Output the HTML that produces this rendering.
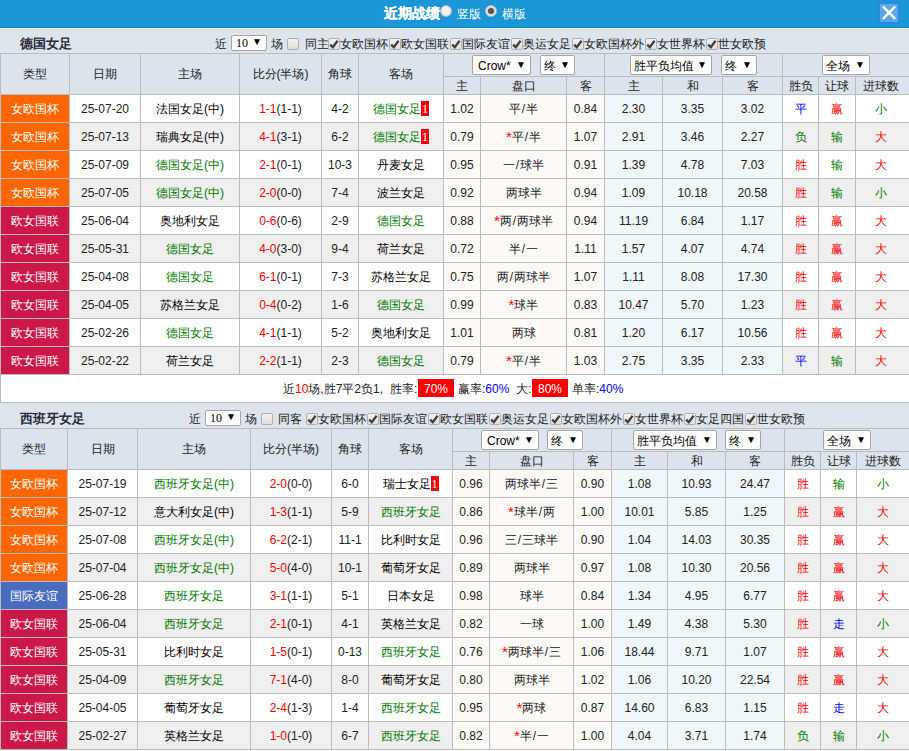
<!DOCTYPE html><html><head><meta charset="utf-8"><title>近期战绩</title><style>
*{margin:0;padding:0;box-sizing:content-box}
body{margin:0;width:909px;height:751px;overflow:hidden;background:#dde4ec;position:relative;font-family:'Liberation Sans', sans-serif;font-size:12px;color:#222}
.c{position:absolute;display:flex;align-items:center;justify-content:center;white-space:nowrap;line-height:14px}
.t{position:absolute;white-space:nowrap;line-height:14px;color:#222}
.ttl{position:absolute;white-space:nowrap;line-height:16px;font-size:13px;font-weight:bold;color:#2a2a3a}
.hl{position:absolute;height:1px;background:#bcbcbc}
.vl{position:absolute;width:1px;background:#bcbcbc}
.sel{position:absolute;box-sizing:border-box;background:#fff;border:1px solid #a6a6a6;border-radius:2px;display:flex;align-items:center;justify-content:space-between;white-space:nowrap;color:#000;line-height:14px}
.arr{font-size:10px}
.cb{position:absolute;width:10px;height:10px;border:1px solid #b0b0b0;border-radius:2px;background:linear-gradient(#f2f2f2,#dedede)}
.rbx{position:absolute;width:36px;height:17px;padding-top:1px;background:#f00;color:#fff;display:flex;align-items:center;justify-content:center;line-height:14px}
.st{color:#f00;font-size:15px;line-height:10px;position:relative;top:0px}
.sl{margin:0 1px}
.bd{display:inline-block;background:#f00;color:#fff;font-family:'Liberation Serif',serif;font-size:13px;width:8px;text-align:center;height:15px;line-height:16px;vertical-align:top;margin-top:-1px}
</style></head><body>
<div style="position:absolute;left:0px;top:0px;width:909px;height:27px;background:#1b96d6"></div>
<div style="position:absolute;left:0px;top:27px;width:909px;height:1px;background:#0b8fd3"></div>
<div style="position:absolute;left:0px;top:28px;width:909px;height:1px;background:#e9ebef"></div>
<div style="position:absolute;left:384px;top:4px;font-size:14px;font-weight:bold;color:#fff;line-height:18px;white-space:nowrap;-webkit-text-stroke:0.2px #fff">近期战绩</div>
<div style="position:absolute;left:440px;top:5px;width:10px;height:10px;border-radius:50%;border:1px solid #b8b8b8;background:radial-gradient(circle at 50% 45%,#f2f2f2 40%,#d8d8d8)"></div>
<div style="position:absolute;left:457px;top:7px;font-size:12px;color:#fff;line-height:14px;white-space:nowrap">竖版</div>
<div style="position:absolute;left:485px;top:5px;width:10px;height:10px;border-radius:50%;border:1px solid #b8b8b8;background:radial-gradient(circle,#bbb 30%,#eee 70%,#d0d0d0)"><div style="position:absolute;left:2px;top:2px;width:6px;height:6px;border-radius:50%;background:#555"></div></div>
<div style="position:absolute;left:502px;top:7px;font-size:12px;color:#fff;line-height:14px;white-space:nowrap">横版</div>
<div style="position:absolute;left:878px;top:2px;width:18px;height:18px;border:2px solid #2a8ae2;background:#5ba7e9"><svg width="18" height="18" viewBox="0 0 18 18" style="position:absolute;left:0;top:0"><path d="M3.6 3.2 L14.6 14.2 M14.6 3.2 L3.6 14.2" stroke="#fff" stroke-width="2.4" stroke-linecap="round" fill="none"/></svg></div>
<div class="ttl" style="left:20px;top:36px">德国女足</div>
<div class="t" style="left:215px;top:37px">近</div>
<div class="sel" style="left:231px;top:35px;width:36px;height:16px;padding:0 4px 0 4px"><span style="position:relative;top:1px;font-family:'Liberation Serif',serif;top:0">10</span><span class="arr" style="position:relative;top:-1px">▼</span></div>
<div class="t" style="left:271px;top:37px">场</div>
<div class="cb" style="left:287px;top:38px;"></div>
<div class="t" style="left:305px;top:37px">同主</div>
<div class="cb" style="left:328px;top:38px;"><svg width="12" height="12" viewBox="0 0 12 12" style="position:absolute;left:-1px;top:-1px"><path d="M2.2 6.6 L4.8 9.2 L9.6 2.8" stroke="#404040" stroke-width="2.3" fill="none"/></svg></div>
<div class="t" style="left:340px;top:37px">女欧国杯</div>
<div class="cb" style="left:389px;top:38px;"><svg width="12" height="12" viewBox="0 0 12 12" style="position:absolute;left:-1px;top:-1px"><path d="M2.2 6.6 L4.8 9.2 L9.6 2.8" stroke="#404040" stroke-width="2.3" fill="none"/></svg></div>
<div class="t" style="left:401px;top:37px">欧女国联</div>
<div class="cb" style="left:450px;top:38px;"><svg width="12" height="12" viewBox="0 0 12 12" style="position:absolute;left:-1px;top:-1px"><path d="M2.2 6.6 L4.8 9.2 L9.6 2.8" stroke="#404040" stroke-width="2.3" fill="none"/></svg></div>
<div class="t" style="left:462px;top:37px">国际友谊</div>
<div class="cb" style="left:511px;top:38px;"><svg width="12" height="12" viewBox="0 0 12 12" style="position:absolute;left:-1px;top:-1px"><path d="M2.2 6.6 L4.8 9.2 L9.6 2.8" stroke="#404040" stroke-width="2.3" fill="none"/></svg></div>
<div class="t" style="left:523px;top:37px">奥运女足</div>
<div class="cb" style="left:572px;top:38px;"><svg width="12" height="12" viewBox="0 0 12 12" style="position:absolute;left:-1px;top:-1px"><path d="M2.2 6.6 L4.8 9.2 L9.6 2.8" stroke="#404040" stroke-width="2.3" fill="none"/></svg></div>
<div class="t" style="left:584px;top:37px">女欧国杯外</div>
<div class="cb" style="left:645px;top:38px;"><svg width="12" height="12" viewBox="0 0 12 12" style="position:absolute;left:-1px;top:-1px"><path d="M2.2 6.6 L4.8 9.2 L9.6 2.8" stroke="#404040" stroke-width="2.3" fill="none"/></svg></div>
<div class="t" style="left:657px;top:37px">女世界杯</div>
<div class="cb" style="left:706px;top:38px;"><svg width="12" height="12" viewBox="0 0 12 12" style="position:absolute;left:-1px;top:-1px"><path d="M2.2 6.6 L4.8 9.2 L9.6 2.8" stroke="#404040" stroke-width="2.3" fill="none"/></svg></div>
<div class="t" style="left:718px;top:37px">世女欧预</div>
<div style="position:absolute;left:0px;top:53px;width:909px;height:41px;background:#dce3ec"></div>
<div class="c" style="left:1px;top:54px;width:68px;height:40px;color:#222">类型</div>
<div class="c" style="left:70px;top:54px;width:70px;height:40px;color:#222">日期</div>
<div class="c" style="left:141px;top:54px;width:98px;height:40px;color:#222">主场</div>
<div class="c" style="left:240px;top:54px;width:81px;height:40px;color:#222">比分(半场)</div>
<div class="c" style="left:322px;top:54px;width:36px;height:40px;color:#222">角球</div>
<div class="c" style="left:359px;top:54px;width:84px;height:40px;color:#222">客场</div>
<div class="c" style="left:444px;top:77px;width:36px;height:17px;color:#222">主</div>
<div class="c" style="left:481px;top:77px;width:85px;height:17px;color:#222">盘口</div>
<div class="c" style="left:567px;top:77px;width:37px;height:17px;color:#222">客</div>
<div class="c" style="left:605px;top:77px;width:57px;height:17px;color:#222">主</div>
<div class="c" style="left:663px;top:77px;width:59px;height:17px;color:#222">和</div>
<div class="c" style="left:723px;top:77px;width:59px;height:17px;color:#222">客</div>
<div class="c" style="left:783px;top:77px;width:35px;height:17px;color:#222">胜负</div>
<div class="c" style="left:819px;top:77px;width:36px;height:17px;color:#222">让球</div>
<div class="c" style="left:856px;top:77px;width:50px;height:17px;color:#222">进球数</div>
<div class="sel" style="left:472px;top:55px;width:59px;height:20px;padding:0 4px 0 5px"><span style="position:relative;top:1px;">Crow*</span><span class="arr" style="">▼</span></div>
<div class="sel" style="left:540px;top:55px;width:35px;height:20px;padding:0 4px 0 3px"><span style="position:relative;top:1px;">终</span><span class="arr" style="">▼</span></div>
<div class="sel" style="left:630px;top:55px;width:82px;height:20px;padding:0 4px 0 3px"><span style="position:relative;top:1px;">胜平负均值</span><span class="arr" style="">▼</span></div>
<div class="sel" style="left:721px;top:55px;width:36px;height:20px;padding:0 4px 0 3px"><span style="position:relative;top:1px;">终</span><span class="arr" style="">▼</span></div>
<div class="sel" style="left:822px;top:55px;width:48px;height:20px;padding:0 4px 0 3px"><span style="position:relative;top:1px;">全场</span><span class="arr" style="">▼</span></div>
<div class="c" style="left:1px;top:95px;width:68px;height:27px;background:#ff6600;color:#fff">女欧国杯</div>
<div class="c" style="left:70px;top:95px;width:70px;height:27px;background:#ffffff">25-07-20</div>
<div class="c" style="left:141px;top:95px;width:98px;height:27px;background:#ffffff;color:#000">法国女足(中)</div>
<div class="c" style="left:240px;top:95px;width:81px;height:27px;background:#ffffff"><span style="color:#ff0000">1-1</span>(1-1)</div>
<div class="c" style="left:322px;top:95px;width:36px;height:27px;background:#ffffff">4-2</div>
<div class="c" style="left:359px;top:95px;width:84px;height:27px;background:#ffffff;color:#000"><span style="color:#007a00">德国女足</span><span class="bd">1</span></div>
<div class="c" style="left:444px;top:95px;width:36px;height:27px;background:#fcf9f6">1.02</div>
<div class="c" style="left:481px;top:95px;width:85px;height:27px;background:#fcf9f6">平<span class="sl">/</span>半</div>
<div class="c" style="left:567px;top:95px;width:37px;height:27px;background:#fcf9f6">0.84</div>
<div class="c" style="left:605px;top:95px;width:57px;height:27px;background:#f0f7fb">2.30</div>
<div class="c" style="left:663px;top:95px;width:59px;height:27px;background:#f0f7fb">3.35</div>
<div class="c" style="left:723px;top:95px;width:59px;height:27px;background:#f0f7fb">3.02</div>
<div class="c" style="left:783px;top:95px;width:35px;height:27px;background:#ffffff"><span style="color:#0000ff">平</span></div>
<div class="c" style="left:819px;top:95px;width:36px;height:27px;background:#ffffff"><span style="color:#ff0000">赢</span></div>
<div class="c" style="left:856px;top:95px;width:53px;height:27px;background:#ffffff;box-sizing:border-box;padding-right:3px"><span style="color:#007a00">小</span></div>
<div class="c" style="left:1px;top:123px;width:68px;height:27px;background:#ff6600;color:#fff">女欧国杯</div>
<div class="c" style="left:70px;top:123px;width:70px;height:27px;background:#efefef">25-07-13</div>
<div class="c" style="left:141px;top:123px;width:98px;height:27px;background:#efefef;color:#000">瑞典女足(中)</div>
<div class="c" style="left:240px;top:123px;width:81px;height:27px;background:#efefef"><span style="color:#ff0000">4-1</span>(3-1)</div>
<div class="c" style="left:322px;top:123px;width:36px;height:27px;background:#efefef">6-2</div>
<div class="c" style="left:359px;top:123px;width:84px;height:27px;background:#efefef;color:#000"><span style="color:#007a00">德国女足</span><span class="bd">1</span></div>
<div class="c" style="left:444px;top:123px;width:36px;height:27px;background:#fcf9f6">0.79</div>
<div class="c" style="left:481px;top:123px;width:85px;height:27px;background:#fcf9f6"><span class="st">*</span>平<span class="sl">/</span>半</div>
<div class="c" style="left:567px;top:123px;width:37px;height:27px;background:#fcf9f6">1.07</div>
<div class="c" style="left:605px;top:123px;width:57px;height:27px;background:#f0f7fb">2.91</div>
<div class="c" style="left:663px;top:123px;width:59px;height:27px;background:#f0f7fb">3.46</div>
<div class="c" style="left:723px;top:123px;width:59px;height:27px;background:#f0f7fb">2.27</div>
<div class="c" style="left:783px;top:123px;width:35px;height:27px;background:#efefef"><span style="color:#007a00">负</span></div>
<div class="c" style="left:819px;top:123px;width:36px;height:27px;background:#efefef"><span style="color:#007a00">输</span></div>
<div class="c" style="left:856px;top:123px;width:53px;height:27px;background:#efefef;box-sizing:border-box;padding-right:3px"><span style="color:#ff0000">大</span></div>
<div class="c" style="left:1px;top:151px;width:68px;height:27px;background:#ff6600;color:#fff">女欧国杯</div>
<div class="c" style="left:70px;top:151px;width:70px;height:27px;background:#ffffff">25-07-09</div>
<div class="c" style="left:141px;top:151px;width:98px;height:27px;background:#ffffff;color:#000"><span style="color:#007a00">德国女足(中)</span></div>
<div class="c" style="left:240px;top:151px;width:81px;height:27px;background:#ffffff"><span style="color:#ff0000">2-1</span>(0-1)</div>
<div class="c" style="left:322px;top:151px;width:36px;height:27px;background:#ffffff">10-3</div>
<div class="c" style="left:359px;top:151px;width:84px;height:27px;background:#ffffff;color:#000">丹麦女足</div>
<div class="c" style="left:444px;top:151px;width:36px;height:27px;background:#fcf9f6">0.95</div>
<div class="c" style="left:481px;top:151px;width:85px;height:27px;background:#fcf9f6">一<span class="sl">/</span>球半</div>
<div class="c" style="left:567px;top:151px;width:37px;height:27px;background:#fcf9f6">0.91</div>
<div class="c" style="left:605px;top:151px;width:57px;height:27px;background:#f0f7fb">1.39</div>
<div class="c" style="left:663px;top:151px;width:59px;height:27px;background:#f0f7fb">4.78</div>
<div class="c" style="left:723px;top:151px;width:59px;height:27px;background:#f0f7fb">7.03</div>
<div class="c" style="left:783px;top:151px;width:35px;height:27px;background:#ffffff"><span style="color:#ff0000">胜</span></div>
<div class="c" style="left:819px;top:151px;width:36px;height:27px;background:#ffffff"><span style="color:#007a00">输</span></div>
<div class="c" style="left:856px;top:151px;width:53px;height:27px;background:#ffffff;box-sizing:border-box;padding-right:3px"><span style="color:#ff0000">大</span></div>
<div class="c" style="left:1px;top:179px;width:68px;height:27px;background:#ff6600;color:#fff">女欧国杯</div>
<div class="c" style="left:70px;top:179px;width:70px;height:27px;background:#efefef">25-07-05</div>
<div class="c" style="left:141px;top:179px;width:98px;height:27px;background:#efefef;color:#000"><span style="color:#007a00">德国女足(中)</span></div>
<div class="c" style="left:240px;top:179px;width:81px;height:27px;background:#efefef"><span style="color:#ff0000">2-0</span>(0-0)</div>
<div class="c" style="left:322px;top:179px;width:36px;height:27px;background:#efefef">7-4</div>
<div class="c" style="left:359px;top:179px;width:84px;height:27px;background:#efefef;color:#000">波兰女足</div>
<div class="c" style="left:444px;top:179px;width:36px;height:27px;background:#fcf9f6">0.92</div>
<div class="c" style="left:481px;top:179px;width:85px;height:27px;background:#fcf9f6">两球半</div>
<div class="c" style="left:567px;top:179px;width:37px;height:27px;background:#fcf9f6">0.94</div>
<div class="c" style="left:605px;top:179px;width:57px;height:27px;background:#f0f7fb">1.09</div>
<div class="c" style="left:663px;top:179px;width:59px;height:27px;background:#f0f7fb">10.18</div>
<div class="c" style="left:723px;top:179px;width:59px;height:27px;background:#f0f7fb">20.58</div>
<div class="c" style="left:783px;top:179px;width:35px;height:27px;background:#efefef"><span style="color:#ff0000">胜</span></div>
<div class="c" style="left:819px;top:179px;width:36px;height:27px;background:#efefef"><span style="color:#007a00">输</span></div>
<div class="c" style="left:856px;top:179px;width:53px;height:27px;background:#efefef;box-sizing:border-box;padding-right:3px"><span style="color:#007a00">小</span></div>
<div class="c" style="left:1px;top:207px;width:68px;height:27px;background:#cc1848;color:#fff">欧女国联</div>
<div class="c" style="left:70px;top:207px;width:70px;height:27px;background:#ffffff">25-06-04</div>
<div class="c" style="left:141px;top:207px;width:98px;height:27px;background:#ffffff;color:#000">奥地利女足</div>
<div class="c" style="left:240px;top:207px;width:81px;height:27px;background:#ffffff"><span style="color:#ff0000">0-6</span>(0-6)</div>
<div class="c" style="left:322px;top:207px;width:36px;height:27px;background:#ffffff">2-9</div>
<div class="c" style="left:359px;top:207px;width:84px;height:27px;background:#ffffff;color:#000"><span style="color:#007a00">德国女足</span></div>
<div class="c" style="left:444px;top:207px;width:36px;height:27px;background:#fcf9f6">0.88</div>
<div class="c" style="left:481px;top:207px;width:85px;height:27px;background:#fcf9f6"><span class="st">*</span>两<span class="sl">/</span>两球半</div>
<div class="c" style="left:567px;top:207px;width:37px;height:27px;background:#fcf9f6">0.94</div>
<div class="c" style="left:605px;top:207px;width:57px;height:27px;background:#f0f7fb">11.19</div>
<div class="c" style="left:663px;top:207px;width:59px;height:27px;background:#f0f7fb">6.84</div>
<div class="c" style="left:723px;top:207px;width:59px;height:27px;background:#f0f7fb">1.17</div>
<div class="c" style="left:783px;top:207px;width:35px;height:27px;background:#ffffff"><span style="color:#ff0000">胜</span></div>
<div class="c" style="left:819px;top:207px;width:36px;height:27px;background:#ffffff"><span style="color:#ff0000">赢</span></div>
<div class="c" style="left:856px;top:207px;width:53px;height:27px;background:#ffffff;box-sizing:border-box;padding-right:3px"><span style="color:#ff0000">大</span></div>
<div class="c" style="left:1px;top:235px;width:68px;height:27px;background:#cc1848;color:#fff">欧女国联</div>
<div class="c" style="left:70px;top:235px;width:70px;height:27px;background:#efefef">25-05-31</div>
<div class="c" style="left:141px;top:235px;width:98px;height:27px;background:#efefef;color:#000"><span style="color:#007a00">德国女足</span></div>
<div class="c" style="left:240px;top:235px;width:81px;height:27px;background:#efefef"><span style="color:#ff0000">4-0</span>(3-0)</div>
<div class="c" style="left:322px;top:235px;width:36px;height:27px;background:#efefef">9-4</div>
<div class="c" style="left:359px;top:235px;width:84px;height:27px;background:#efefef;color:#000">荷兰女足</div>
<div class="c" style="left:444px;top:235px;width:36px;height:27px;background:#fcf9f6">0.72</div>
<div class="c" style="left:481px;top:235px;width:85px;height:27px;background:#fcf9f6">半<span class="sl">/</span>一</div>
<div class="c" style="left:567px;top:235px;width:37px;height:27px;background:#fcf9f6">1.11</div>
<div class="c" style="left:605px;top:235px;width:57px;height:27px;background:#f0f7fb">1.57</div>
<div class="c" style="left:663px;top:235px;width:59px;height:27px;background:#f0f7fb">4.07</div>
<div class="c" style="left:723px;top:235px;width:59px;height:27px;background:#f0f7fb">4.74</div>
<div class="c" style="left:783px;top:235px;width:35px;height:27px;background:#efefef"><span style="color:#ff0000">胜</span></div>
<div class="c" style="left:819px;top:235px;width:36px;height:27px;background:#efefef"><span style="color:#ff0000">赢</span></div>
<div class="c" style="left:856px;top:235px;width:53px;height:27px;background:#efefef;box-sizing:border-box;padding-right:3px"><span style="color:#ff0000">大</span></div>
<div class="c" style="left:1px;top:263px;width:68px;height:27px;background:#cc1848;color:#fff">欧女国联</div>
<div class="c" style="left:70px;top:263px;width:70px;height:27px;background:#ffffff">25-04-08</div>
<div class="c" style="left:141px;top:263px;width:98px;height:27px;background:#ffffff;color:#000"><span style="color:#007a00">德国女足</span></div>
<div class="c" style="left:240px;top:263px;width:81px;height:27px;background:#ffffff"><span style="color:#ff0000">6-1</span>(0-1)</div>
<div class="c" style="left:322px;top:263px;width:36px;height:27px;background:#ffffff">7-3</div>
<div class="c" style="left:359px;top:263px;width:84px;height:27px;background:#ffffff;color:#000">苏格兰女足</div>
<div class="c" style="left:444px;top:263px;width:36px;height:27px;background:#fcf9f6">0.75</div>
<div class="c" style="left:481px;top:263px;width:85px;height:27px;background:#fcf9f6">两<span class="sl">/</span>两球半</div>
<div class="c" style="left:567px;top:263px;width:37px;height:27px;background:#fcf9f6">1.07</div>
<div class="c" style="left:605px;top:263px;width:57px;height:27px;background:#f0f7fb">1.11</div>
<div class="c" style="left:663px;top:263px;width:59px;height:27px;background:#f0f7fb">8.08</div>
<div class="c" style="left:723px;top:263px;width:59px;height:27px;background:#f0f7fb">17.30</div>
<div class="c" style="left:783px;top:263px;width:35px;height:27px;background:#ffffff"><span style="color:#ff0000">胜</span></div>
<div class="c" style="left:819px;top:263px;width:36px;height:27px;background:#ffffff"><span style="color:#ff0000">赢</span></div>
<div class="c" style="left:856px;top:263px;width:53px;height:27px;background:#ffffff;box-sizing:border-box;padding-right:3px"><span style="color:#ff0000">大</span></div>
<div class="c" style="left:1px;top:291px;width:68px;height:27px;background:#cc1848;color:#fff">欧女国联</div>
<div class="c" style="left:70px;top:291px;width:70px;height:27px;background:#efefef">25-04-05</div>
<div class="c" style="left:141px;top:291px;width:98px;height:27px;background:#efefef;color:#000">苏格兰女足</div>
<div class="c" style="left:240px;top:291px;width:81px;height:27px;background:#efefef"><span style="color:#ff0000">0-4</span>(0-2)</div>
<div class="c" style="left:322px;top:291px;width:36px;height:27px;background:#efefef">1-6</div>
<div class="c" style="left:359px;top:291px;width:84px;height:27px;background:#efefef;color:#000"><span style="color:#007a00">德国女足</span></div>
<div class="c" style="left:444px;top:291px;width:36px;height:27px;background:#fcf9f6">0.99</div>
<div class="c" style="left:481px;top:291px;width:85px;height:27px;background:#fcf9f6"><span class="st">*</span>球半</div>
<div class="c" style="left:567px;top:291px;width:37px;height:27px;background:#fcf9f6">0.83</div>
<div class="c" style="left:605px;top:291px;width:57px;height:27px;background:#f0f7fb">10.47</div>
<div class="c" style="left:663px;top:291px;width:59px;height:27px;background:#f0f7fb">5.70</div>
<div class="c" style="left:723px;top:291px;width:59px;height:27px;background:#f0f7fb">1.23</div>
<div class="c" style="left:783px;top:291px;width:35px;height:27px;background:#efefef"><span style="color:#ff0000">胜</span></div>
<div class="c" style="left:819px;top:291px;width:36px;height:27px;background:#efefef"><span style="color:#ff0000">赢</span></div>
<div class="c" style="left:856px;top:291px;width:53px;height:27px;background:#efefef;box-sizing:border-box;padding-right:3px"><span style="color:#ff0000">大</span></div>
<div class="c" style="left:1px;top:319px;width:68px;height:27px;background:#cc1848;color:#fff">欧女国联</div>
<div class="c" style="left:70px;top:319px;width:70px;height:27px;background:#ffffff">25-02-26</div>
<div class="c" style="left:141px;top:319px;width:98px;height:27px;background:#ffffff;color:#000"><span style="color:#007a00">德国女足</span></div>
<div class="c" style="left:240px;top:319px;width:81px;height:27px;background:#ffffff"><span style="color:#ff0000">4-1</span>(1-1)</div>
<div class="c" style="left:322px;top:319px;width:36px;height:27px;background:#ffffff">5-2</div>
<div class="c" style="left:359px;top:319px;width:84px;height:27px;background:#ffffff;color:#000">奥地利女足</div>
<div class="c" style="left:444px;top:319px;width:36px;height:27px;background:#fcf9f6">1.01</div>
<div class="c" style="left:481px;top:319px;width:85px;height:27px;background:#fcf9f6">两球</div>
<div class="c" style="left:567px;top:319px;width:37px;height:27px;background:#fcf9f6">0.81</div>
<div class="c" style="left:605px;top:319px;width:57px;height:27px;background:#f0f7fb">1.20</div>
<div class="c" style="left:663px;top:319px;width:59px;height:27px;background:#f0f7fb">6.17</div>
<div class="c" style="left:723px;top:319px;width:59px;height:27px;background:#f0f7fb">10.56</div>
<div class="c" style="left:783px;top:319px;width:35px;height:27px;background:#ffffff"><span style="color:#ff0000">胜</span></div>
<div class="c" style="left:819px;top:319px;width:36px;height:27px;background:#ffffff"><span style="color:#ff0000">赢</span></div>
<div class="c" style="left:856px;top:319px;width:53px;height:27px;background:#ffffff;box-sizing:border-box;padding-right:3px"><span style="color:#ff0000">大</span></div>
<div class="c" style="left:1px;top:347px;width:68px;height:27px;background:#cc1848;color:#fff">欧女国联</div>
<div class="c" style="left:70px;top:347px;width:70px;height:27px;background:#efefef">25-02-22</div>
<div class="c" style="left:141px;top:347px;width:98px;height:27px;background:#efefef;color:#000">荷兰女足</div>
<div class="c" style="left:240px;top:347px;width:81px;height:27px;background:#efefef"><span style="color:#ff0000">2-2</span>(1-1)</div>
<div class="c" style="left:322px;top:347px;width:36px;height:27px;background:#efefef">2-3</div>
<div class="c" style="left:359px;top:347px;width:84px;height:27px;background:#efefef;color:#000"><span style="color:#007a00">德国女足</span></div>
<div class="c" style="left:444px;top:347px;width:36px;height:27px;background:#fcf9f6">0.79</div>
<div class="c" style="left:481px;top:347px;width:85px;height:27px;background:#fcf9f6"><span class="st">*</span>平<span class="sl">/</span>半</div>
<div class="c" style="left:567px;top:347px;width:37px;height:27px;background:#fcf9f6">1.03</div>
<div class="c" style="left:605px;top:347px;width:57px;height:27px;background:#f0f7fb">2.75</div>
<div class="c" style="left:663px;top:347px;width:59px;height:27px;background:#f0f7fb">3.35</div>
<div class="c" style="left:723px;top:347px;width:59px;height:27px;background:#f0f7fb">2.33</div>
<div class="c" style="left:783px;top:347px;width:35px;height:27px;background:#efefef"><span style="color:#0000ff">平</span></div>
<div class="c" style="left:819px;top:347px;width:36px;height:27px;background:#efefef"><span style="color:#007a00">输</span></div>
<div class="c" style="left:856px;top:347px;width:53px;height:27px;background:#efefef;box-sizing:border-box;padding-right:3px"><span style="color:#ff0000">大</span></div>
<div class="hl" style="left:0;top:53px;width:909px"></div>
<div class="hl" style="left:443px;top:76px;width:466px"></div>
<div class="hl" style="left:0;top:94px;width:909px"></div>
<div class="hl" style="left:0;top:122px;width:909px"></div>
<div class="hl" style="left:0;top:150px;width:909px"></div>
<div class="hl" style="left:0;top:178px;width:909px"></div>
<div class="hl" style="left:0;top:206px;width:909px"></div>
<div class="hl" style="left:0;top:234px;width:909px"></div>
<div class="hl" style="left:0;top:262px;width:909px"></div>
<div class="hl" style="left:0;top:290px;width:909px"></div>
<div class="hl" style="left:0;top:318px;width:909px"></div>
<div class="hl" style="left:0;top:346px;width:909px"></div>
<div class="hl" style="left:0;top:374px;width:909px"></div>
<div class="vl" style="left:0px;top:53px;height:322px"></div>
<div class="vl" style="left:69px;top:53px;height:322px"></div>
<div class="vl" style="left:140px;top:53px;height:322px"></div>
<div class="vl" style="left:239px;top:53px;height:322px"></div>
<div class="vl" style="left:321px;top:53px;height:322px"></div>
<div class="vl" style="left:358px;top:53px;height:322px"></div>
<div class="vl" style="left:443px;top:53px;height:322px"></div>
<div class="vl" style="left:480px;top:76px;height:299px"></div>
<div class="vl" style="left:566px;top:76px;height:299px"></div>
<div class="vl" style="left:604px;top:53px;height:322px"></div>
<div class="vl" style="left:662px;top:76px;height:299px"></div>
<div class="vl" style="left:722px;top:76px;height:299px"></div>
<div class="vl" style="left:782px;top:53px;height:322px"></div>
<div class="vl" style="left:818px;top:76px;height:299px"></div>
<div class="vl" style="left:855px;top:76px;height:299px"></div>
<div style="position:absolute;left:0px;top:375px;width:909px;height:27px;background:#fff"></div>
<div class="t" style="left:283px;top:382px">近<span style="color:#ff0000">10</span>场,胜7平2负1,</div>
<div class="t" style="left:390px;top:382px">胜率:</div>
<div class="rbx" style="left:418px;top:379px">70%</div>
<div class="t" style="left:458px;top:382px">赢率:<span style="color:#0000ff">60%</span></div>
<div class="t" style="left:516px;top:382px">大:</div>
<div class="rbx" style="left:532px;top:379px">80%</div>
<div class="t" style="left:572px;top:382px">单率:<span style="color:#0000ff">40%</span></div>
<div class="hl" style="left:0;top:402px;width:909px"></div>
<div class="vl" style="left:0;top:374px;height:28px"></div>
<div class="ttl" style="left:20px;top:411px">西班牙女足</div>
<div class="t" style="left:189px;top:412px">近</div>
<div class="sel" style="left:205px;top:410px;width:36px;height:16px;padding:0 4px 0 4px"><span style="position:relative;top:1px;font-family:'Liberation Serif',serif;top:0">10</span><span class="arr" style="position:relative;top:-1px">▼</span></div>
<div class="t" style="left:245px;top:412px">场</div>
<div class="cb" style="left:261px;top:413px;"></div>
<div class="t" style="left:278px;top:412px">同客</div>
<div class="cb" style="left:306px;top:413px;"><svg width="12" height="12" viewBox="0 0 12 12" style="position:absolute;left:-1px;top:-1px"><path d="M2.2 6.6 L4.8 9.2 L9.6 2.8" stroke="#404040" stroke-width="2.3" fill="none"/></svg></div>
<div class="t" style="left:318px;top:412px">女欧国杯</div>
<div class="cb" style="left:367px;top:413px;"><svg width="12" height="12" viewBox="0 0 12 12" style="position:absolute;left:-1px;top:-1px"><path d="M2.2 6.6 L4.8 9.2 L9.6 2.8" stroke="#404040" stroke-width="2.3" fill="none"/></svg></div>
<div class="t" style="left:379px;top:412px">国际友谊</div>
<div class="cb" style="left:428px;top:413px;"><svg width="12" height="12" viewBox="0 0 12 12" style="position:absolute;left:-1px;top:-1px"><path d="M2.2 6.6 L4.8 9.2 L9.6 2.8" stroke="#404040" stroke-width="2.3" fill="none"/></svg></div>
<div class="t" style="left:440px;top:412px">欧女国联</div>
<div class="cb" style="left:489px;top:413px;"><svg width="12" height="12" viewBox="0 0 12 12" style="position:absolute;left:-1px;top:-1px"><path d="M2.2 6.6 L4.8 9.2 L9.6 2.8" stroke="#404040" stroke-width="2.3" fill="none"/></svg></div>
<div class="t" style="left:501px;top:412px">奥运女足</div>
<div class="cb" style="left:550px;top:413px;"><svg width="12" height="12" viewBox="0 0 12 12" style="position:absolute;left:-1px;top:-1px"><path d="M2.2 6.6 L4.8 9.2 L9.6 2.8" stroke="#404040" stroke-width="2.3" fill="none"/></svg></div>
<div class="t" style="left:562px;top:412px">女欧国杯外</div>
<div class="cb" style="left:623px;top:413px;"><svg width="12" height="12" viewBox="0 0 12 12" style="position:absolute;left:-1px;top:-1px"><path d="M2.2 6.6 L4.8 9.2 L9.6 2.8" stroke="#404040" stroke-width="2.3" fill="none"/></svg></div>
<div class="t" style="left:635px;top:412px">女世界杯</div>
<div class="cb" style="left:684px;top:413px;"><svg width="12" height="12" viewBox="0 0 12 12" style="position:absolute;left:-1px;top:-1px"><path d="M2.2 6.6 L4.8 9.2 L9.6 2.8" stroke="#404040" stroke-width="2.3" fill="none"/></svg></div>
<div class="t" style="left:696px;top:412px">女足四国</div>
<div class="cb" style="left:745px;top:413px;"><svg width="12" height="12" viewBox="0 0 12 12" style="position:absolute;left:-1px;top:-1px"><path d="M2.2 6.6 L4.8 9.2 L9.6 2.8" stroke="#404040" stroke-width="2.3" fill="none"/></svg></div>
<div class="t" style="left:757px;top:412px">世女欧预</div>
<div style="position:absolute;left:0px;top:428px;width:909px;height:41px;background:#dce3ec"></div>
<div class="c" style="left:1px;top:429px;width:66px;height:40px;color:#222">类型</div>
<div class="c" style="left:68px;top:429px;width:69px;height:40px;color:#222">日期</div>
<div class="c" style="left:138px;top:429px;width:112px;height:40px;color:#222">主场</div>
<div class="c" style="left:251px;top:429px;width:80px;height:40px;color:#222">比分(半场)</div>
<div class="c" style="left:332px;top:429px;width:36px;height:40px;color:#222">角球</div>
<div class="c" style="left:369px;top:429px;width:83px;height:40px;color:#222">客场</div>
<div class="c" style="left:453px;top:452px;width:36px;height:17px;color:#222">主</div>
<div class="c" style="left:490px;top:452px;width:83px;height:17px;color:#222">盘口</div>
<div class="c" style="left:574px;top:452px;width:37px;height:17px;color:#222">客</div>
<div class="c" style="left:612px;top:452px;width:55px;height:17px;color:#222">主</div>
<div class="c" style="left:668px;top:452px;width:57px;height:17px;color:#222">和</div>
<div class="c" style="left:726px;top:452px;width:58px;height:17px;color:#222">客</div>
<div class="c" style="left:785px;top:452px;width:35px;height:17px;color:#222">胜负</div>
<div class="c" style="left:821px;top:452px;width:35px;height:17px;color:#222">让球</div>
<div class="c" style="left:857px;top:452px;width:52px;height:17px;color:#222">进球数</div>
<div class="sel" style="left:481px;top:430px;width:58px;height:20px;padding:0 4px 0 5px"><span style="position:relative;top:1px;">Crow*</span><span class="arr" style="">▼</span></div>
<div class="sel" style="left:547px;top:430px;width:36px;height:20px;padding:0 4px 0 3px"><span style="position:relative;top:1px;">终</span><span class="arr" style="">▼</span></div>
<div class="sel" style="left:633px;top:430px;width:84px;height:20px;padding:0 4px 0 3px"><span style="position:relative;top:1px;">胜平负均值</span><span class="arr" style="">▼</span></div>
<div class="sel" style="left:725px;top:430px;width:36px;height:20px;padding:0 4px 0 3px"><span style="position:relative;top:1px;">终</span><span class="arr" style="">▼</span></div>
<div class="sel" style="left:823px;top:430px;width:48px;height:20px;padding:0 4px 0 3px"><span style="position:relative;top:1px;">全场</span><span class="arr" style="">▼</span></div>
<div class="c" style="left:1px;top:470px;width:66px;height:27px;background:#ff6600;color:#fff">女欧国杯</div>
<div class="c" style="left:68px;top:470px;width:69px;height:27px;background:#ffffff">25-07-19</div>
<div class="c" style="left:138px;top:470px;width:112px;height:27px;background:#ffffff;color:#000"><span style="color:#007a00">西班牙女足(中)</span></div>
<div class="c" style="left:251px;top:470px;width:80px;height:27px;background:#ffffff"><span style="color:#ff0000">2-0</span>(0-0)</div>
<div class="c" style="left:332px;top:470px;width:36px;height:27px;background:#ffffff">6-0</div>
<div class="c" style="left:369px;top:470px;width:83px;height:27px;background:#ffffff;color:#000">瑞士女足<span class="bd">1</span></div>
<div class="c" style="left:453px;top:470px;width:36px;height:27px;background:#fcf9f6">0.96</div>
<div class="c" style="left:490px;top:470px;width:83px;height:27px;background:#fcf9f6">两球半<span class="sl">/</span>三</div>
<div class="c" style="left:574px;top:470px;width:37px;height:27px;background:#fcf9f6">0.90</div>
<div class="c" style="left:612px;top:470px;width:55px;height:27px;background:#f0f7fb">1.08</div>
<div class="c" style="left:668px;top:470px;width:57px;height:27px;background:#f0f7fb">10.93</div>
<div class="c" style="left:726px;top:470px;width:58px;height:27px;background:#f0f7fb">24.47</div>
<div class="c" style="left:785px;top:470px;width:35px;height:27px;background:#ffffff"><span style="color:#ff0000">胜</span></div>
<div class="c" style="left:821px;top:470px;width:35px;height:27px;background:#ffffff"><span style="color:#007a00">输</span></div>
<div class="c" style="left:857px;top:470px;width:52px;height:27px;background:#ffffff"><span style="color:#007a00">小</span></div>
<div class="c" style="left:1px;top:498px;width:66px;height:27px;background:#ff6600;color:#fff">女欧国杯</div>
<div class="c" style="left:68px;top:498px;width:69px;height:27px;background:#efefef">25-07-12</div>
<div class="c" style="left:138px;top:498px;width:112px;height:27px;background:#efefef;color:#000">意大利女足(中)</div>
<div class="c" style="left:251px;top:498px;width:80px;height:27px;background:#efefef"><span style="color:#ff0000">1-3</span>(1-1)</div>
<div class="c" style="left:332px;top:498px;width:36px;height:27px;background:#efefef">5-9</div>
<div class="c" style="left:369px;top:498px;width:83px;height:27px;background:#efefef;color:#000"><span style="color:#007a00">西班牙女足</span></div>
<div class="c" style="left:453px;top:498px;width:36px;height:27px;background:#fcf9f6">0.86</div>
<div class="c" style="left:490px;top:498px;width:83px;height:27px;background:#fcf9f6"><span class="st">*</span>球半<span class="sl">/</span>两</div>
<div class="c" style="left:574px;top:498px;width:37px;height:27px;background:#fcf9f6">1.00</div>
<div class="c" style="left:612px;top:498px;width:55px;height:27px;background:#f0f7fb">10.01</div>
<div class="c" style="left:668px;top:498px;width:57px;height:27px;background:#f0f7fb">5.85</div>
<div class="c" style="left:726px;top:498px;width:58px;height:27px;background:#f0f7fb">1.25</div>
<div class="c" style="left:785px;top:498px;width:35px;height:27px;background:#efefef"><span style="color:#ff0000">胜</span></div>
<div class="c" style="left:821px;top:498px;width:35px;height:27px;background:#efefef"><span style="color:#ff0000">赢</span></div>
<div class="c" style="left:857px;top:498px;width:52px;height:27px;background:#efefef"><span style="color:#ff0000">大</span></div>
<div class="c" style="left:1px;top:526px;width:66px;height:27px;background:#ff6600;color:#fff">女欧国杯</div>
<div class="c" style="left:68px;top:526px;width:69px;height:27px;background:#ffffff">25-07-08</div>
<div class="c" style="left:138px;top:526px;width:112px;height:27px;background:#ffffff;color:#000"><span style="color:#007a00">西班牙女足(中)</span></div>
<div class="c" style="left:251px;top:526px;width:80px;height:27px;background:#ffffff"><span style="color:#ff0000">6-2</span>(2-1)</div>
<div class="c" style="left:332px;top:526px;width:36px;height:27px;background:#ffffff">11-1</div>
<div class="c" style="left:369px;top:526px;width:83px;height:27px;background:#ffffff;color:#000">比利时女足</div>
<div class="c" style="left:453px;top:526px;width:36px;height:27px;background:#fcf9f6">0.96</div>
<div class="c" style="left:490px;top:526px;width:83px;height:27px;background:#fcf9f6">三<span class="sl">/</span>三球半</div>
<div class="c" style="left:574px;top:526px;width:37px;height:27px;background:#fcf9f6">0.90</div>
<div class="c" style="left:612px;top:526px;width:55px;height:27px;background:#f0f7fb">1.04</div>
<div class="c" style="left:668px;top:526px;width:57px;height:27px;background:#f0f7fb">14.03</div>
<div class="c" style="left:726px;top:526px;width:58px;height:27px;background:#f0f7fb">30.35</div>
<div class="c" style="left:785px;top:526px;width:35px;height:27px;background:#ffffff"><span style="color:#ff0000">胜</span></div>
<div class="c" style="left:821px;top:526px;width:35px;height:27px;background:#ffffff"><span style="color:#ff0000">赢</span></div>
<div class="c" style="left:857px;top:526px;width:52px;height:27px;background:#ffffff"><span style="color:#ff0000">大</span></div>
<div class="c" style="left:1px;top:554px;width:66px;height:27px;background:#ff6600;color:#fff">女欧国杯</div>
<div class="c" style="left:68px;top:554px;width:69px;height:27px;background:#efefef">25-07-04</div>
<div class="c" style="left:138px;top:554px;width:112px;height:27px;background:#efefef;color:#000"><span style="color:#007a00">西班牙女足(中)</span></div>
<div class="c" style="left:251px;top:554px;width:80px;height:27px;background:#efefef"><span style="color:#ff0000">5-0</span>(4-0)</div>
<div class="c" style="left:332px;top:554px;width:36px;height:27px;background:#efefef">10-1</div>
<div class="c" style="left:369px;top:554px;width:83px;height:27px;background:#efefef;color:#000">葡萄牙女足</div>
<div class="c" style="left:453px;top:554px;width:36px;height:27px;background:#fcf9f6">0.89</div>
<div class="c" style="left:490px;top:554px;width:83px;height:27px;background:#fcf9f6">两球半</div>
<div class="c" style="left:574px;top:554px;width:37px;height:27px;background:#fcf9f6">0.97</div>
<div class="c" style="left:612px;top:554px;width:55px;height:27px;background:#f0f7fb">1.08</div>
<div class="c" style="left:668px;top:554px;width:57px;height:27px;background:#f0f7fb">10.30</div>
<div class="c" style="left:726px;top:554px;width:58px;height:27px;background:#f0f7fb">20.56</div>
<div class="c" style="left:785px;top:554px;width:35px;height:27px;background:#efefef"><span style="color:#ff0000">胜</span></div>
<div class="c" style="left:821px;top:554px;width:35px;height:27px;background:#efefef"><span style="color:#ff0000">赢</span></div>
<div class="c" style="left:857px;top:554px;width:52px;height:27px;background:#efefef"><span style="color:#ff0000">大</span></div>
<div class="c" style="left:1px;top:582px;width:66px;height:27px;background:#4a6cbe;color:#fff">国际友谊</div>
<div class="c" style="left:68px;top:582px;width:69px;height:27px;background:#ffffff">25-06-28</div>
<div class="c" style="left:138px;top:582px;width:112px;height:27px;background:#ffffff;color:#000"><span style="color:#007a00">西班牙女足</span></div>
<div class="c" style="left:251px;top:582px;width:80px;height:27px;background:#ffffff"><span style="color:#ff0000">3-1</span>(1-1)</div>
<div class="c" style="left:332px;top:582px;width:36px;height:27px;background:#ffffff">5-1</div>
<div class="c" style="left:369px;top:582px;width:83px;height:27px;background:#ffffff;color:#000">日本女足</div>
<div class="c" style="left:453px;top:582px;width:36px;height:27px;background:#fcf9f6">0.98</div>
<div class="c" style="left:490px;top:582px;width:83px;height:27px;background:#fcf9f6">球半</div>
<div class="c" style="left:574px;top:582px;width:37px;height:27px;background:#fcf9f6">0.84</div>
<div class="c" style="left:612px;top:582px;width:55px;height:27px;background:#f0f7fb">1.34</div>
<div class="c" style="left:668px;top:582px;width:57px;height:27px;background:#f0f7fb">4.95</div>
<div class="c" style="left:726px;top:582px;width:58px;height:27px;background:#f0f7fb">6.77</div>
<div class="c" style="left:785px;top:582px;width:35px;height:27px;background:#ffffff"><span style="color:#ff0000">胜</span></div>
<div class="c" style="left:821px;top:582px;width:35px;height:27px;background:#ffffff"><span style="color:#ff0000">赢</span></div>
<div class="c" style="left:857px;top:582px;width:52px;height:27px;background:#ffffff"><span style="color:#ff0000">大</span></div>
<div class="c" style="left:1px;top:610px;width:66px;height:27px;background:#cc1848;color:#fff">欧女国联</div>
<div class="c" style="left:68px;top:610px;width:69px;height:27px;background:#efefef">25-06-04</div>
<div class="c" style="left:138px;top:610px;width:112px;height:27px;background:#efefef;color:#000"><span style="color:#007a00">西班牙女足</span></div>
<div class="c" style="left:251px;top:610px;width:80px;height:27px;background:#efefef"><span style="color:#ff0000">2-1</span>(0-1)</div>
<div class="c" style="left:332px;top:610px;width:36px;height:27px;background:#efefef">4-1</div>
<div class="c" style="left:369px;top:610px;width:83px;height:27px;background:#efefef;color:#000">英格兰女足</div>
<div class="c" style="left:453px;top:610px;width:36px;height:27px;background:#fcf9f6">0.82</div>
<div class="c" style="left:490px;top:610px;width:83px;height:27px;background:#fcf9f6">一球</div>
<div class="c" style="left:574px;top:610px;width:37px;height:27px;background:#fcf9f6">1.00</div>
<div class="c" style="left:612px;top:610px;width:55px;height:27px;background:#f0f7fb">1.49</div>
<div class="c" style="left:668px;top:610px;width:57px;height:27px;background:#f0f7fb">4.38</div>
<div class="c" style="left:726px;top:610px;width:58px;height:27px;background:#f0f7fb">5.30</div>
<div class="c" style="left:785px;top:610px;width:35px;height:27px;background:#efefef"><span style="color:#ff0000">胜</span></div>
<div class="c" style="left:821px;top:610px;width:35px;height:27px;background:#efefef"><span style="color:#0000ff">走</span></div>
<div class="c" style="left:857px;top:610px;width:52px;height:27px;background:#efefef"><span style="color:#007a00">小</span></div>
<div class="c" style="left:1px;top:638px;width:66px;height:27px;background:#cc1848;color:#fff">欧女国联</div>
<div class="c" style="left:68px;top:638px;width:69px;height:27px;background:#ffffff">25-05-31</div>
<div class="c" style="left:138px;top:638px;width:112px;height:27px;background:#ffffff;color:#000">比利时女足</div>
<div class="c" style="left:251px;top:638px;width:80px;height:27px;background:#ffffff"><span style="color:#ff0000">1-5</span>(0-1)</div>
<div class="c" style="left:332px;top:638px;width:36px;height:27px;background:#ffffff">0-13</div>
<div class="c" style="left:369px;top:638px;width:83px;height:27px;background:#ffffff;color:#000"><span style="color:#007a00">西班牙女足</span></div>
<div class="c" style="left:453px;top:638px;width:36px;height:27px;background:#fcf9f6">0.76</div>
<div class="c" style="left:490px;top:638px;width:83px;height:27px;background:#fcf9f6"><span class="st">*</span>两球半<span class="sl">/</span>三</div>
<div class="c" style="left:574px;top:638px;width:37px;height:27px;background:#fcf9f6">1.06</div>
<div class="c" style="left:612px;top:638px;width:55px;height:27px;background:#f0f7fb">18.44</div>
<div class="c" style="left:668px;top:638px;width:57px;height:27px;background:#f0f7fb">9.71</div>
<div class="c" style="left:726px;top:638px;width:58px;height:27px;background:#f0f7fb">1.07</div>
<div class="c" style="left:785px;top:638px;width:35px;height:27px;background:#ffffff"><span style="color:#ff0000">胜</span></div>
<div class="c" style="left:821px;top:638px;width:35px;height:27px;background:#ffffff"><span style="color:#ff0000">赢</span></div>
<div class="c" style="left:857px;top:638px;width:52px;height:27px;background:#ffffff"><span style="color:#ff0000">大</span></div>
<div class="c" style="left:1px;top:666px;width:66px;height:27px;background:#cc1848;color:#fff">欧女国联</div>
<div class="c" style="left:68px;top:666px;width:69px;height:27px;background:#efefef">25-04-09</div>
<div class="c" style="left:138px;top:666px;width:112px;height:27px;background:#efefef;color:#000"><span style="color:#007a00">西班牙女足</span></div>
<div class="c" style="left:251px;top:666px;width:80px;height:27px;background:#efefef"><span style="color:#ff0000">7-1</span>(4-0)</div>
<div class="c" style="left:332px;top:666px;width:36px;height:27px;background:#efefef">8-0</div>
<div class="c" style="left:369px;top:666px;width:83px;height:27px;background:#efefef;color:#000">葡萄牙女足</div>
<div class="c" style="left:453px;top:666px;width:36px;height:27px;background:#fcf9f6">0.80</div>
<div class="c" style="left:490px;top:666px;width:83px;height:27px;background:#fcf9f6">两球半</div>
<div class="c" style="left:574px;top:666px;width:37px;height:27px;background:#fcf9f6">1.02</div>
<div class="c" style="left:612px;top:666px;width:55px;height:27px;background:#f0f7fb">1.06</div>
<div class="c" style="left:668px;top:666px;width:57px;height:27px;background:#f0f7fb">10.20</div>
<div class="c" style="left:726px;top:666px;width:58px;height:27px;background:#f0f7fb">22.54</div>
<div class="c" style="left:785px;top:666px;width:35px;height:27px;background:#efefef"><span style="color:#ff0000">胜</span></div>
<div class="c" style="left:821px;top:666px;width:35px;height:27px;background:#efefef"><span style="color:#ff0000">赢</span></div>
<div class="c" style="left:857px;top:666px;width:52px;height:27px;background:#efefef"><span style="color:#ff0000">大</span></div>
<div class="c" style="left:1px;top:694px;width:66px;height:27px;background:#cc1848;color:#fff">欧女国联</div>
<div class="c" style="left:68px;top:694px;width:69px;height:27px;background:#ffffff">25-04-05</div>
<div class="c" style="left:138px;top:694px;width:112px;height:27px;background:#ffffff;color:#000">葡萄牙女足</div>
<div class="c" style="left:251px;top:694px;width:80px;height:27px;background:#ffffff"><span style="color:#ff0000">2-4</span>(1-3)</div>
<div class="c" style="left:332px;top:694px;width:36px;height:27px;background:#ffffff">1-4</div>
<div class="c" style="left:369px;top:694px;width:83px;height:27px;background:#ffffff;color:#000"><span style="color:#007a00">西班牙女足</span></div>
<div class="c" style="left:453px;top:694px;width:36px;height:27px;background:#fcf9f6">0.95</div>
<div class="c" style="left:490px;top:694px;width:83px;height:27px;background:#fcf9f6"><span class="st">*</span>两球</div>
<div class="c" style="left:574px;top:694px;width:37px;height:27px;background:#fcf9f6">0.87</div>
<div class="c" style="left:612px;top:694px;width:55px;height:27px;background:#f0f7fb">14.60</div>
<div class="c" style="left:668px;top:694px;width:57px;height:27px;background:#f0f7fb">6.83</div>
<div class="c" style="left:726px;top:694px;width:58px;height:27px;background:#f0f7fb">1.15</div>
<div class="c" style="left:785px;top:694px;width:35px;height:27px;background:#ffffff"><span style="color:#ff0000">胜</span></div>
<div class="c" style="left:821px;top:694px;width:35px;height:27px;background:#ffffff"><span style="color:#0000ff">走</span></div>
<div class="c" style="left:857px;top:694px;width:52px;height:27px;background:#ffffff"><span style="color:#ff0000">大</span></div>
<div class="c" style="left:1px;top:722px;width:66px;height:27px;background:#cc1848;color:#fff">欧女国联</div>
<div class="c" style="left:68px;top:722px;width:69px;height:27px;background:#efefef">25-02-27</div>
<div class="c" style="left:138px;top:722px;width:112px;height:27px;background:#efefef;color:#000">英格兰女足</div>
<div class="c" style="left:251px;top:722px;width:80px;height:27px;background:#efefef"><span style="color:#ff0000">1-0</span>(1-0)</div>
<div class="c" style="left:332px;top:722px;width:36px;height:27px;background:#efefef">6-7</div>
<div class="c" style="left:369px;top:722px;width:83px;height:27px;background:#efefef;color:#000"><span style="color:#007a00">西班牙女足</span></div>
<div class="c" style="left:453px;top:722px;width:36px;height:27px;background:#fcf9f6">0.82</div>
<div class="c" style="left:490px;top:722px;width:83px;height:27px;background:#fcf9f6"><span class="st">*</span>半<span class="sl">/</span>一</div>
<div class="c" style="left:574px;top:722px;width:37px;height:27px;background:#fcf9f6">1.00</div>
<div class="c" style="left:612px;top:722px;width:55px;height:27px;background:#f0f7fb">4.04</div>
<div class="c" style="left:668px;top:722px;width:57px;height:27px;background:#f0f7fb">3.71</div>
<div class="c" style="left:726px;top:722px;width:58px;height:27px;background:#f0f7fb">1.74</div>
<div class="c" style="left:785px;top:722px;width:35px;height:27px;background:#efefef"><span style="color:#007a00">负</span></div>
<div class="c" style="left:821px;top:722px;width:35px;height:27px;background:#efefef"><span style="color:#007a00">输</span></div>
<div class="c" style="left:857px;top:722px;width:52px;height:27px;background:#efefef"><span style="color:#007a00">小</span></div>
<div class="hl" style="left:0;top:428px;width:909px"></div>
<div class="hl" style="left:452px;top:451px;width:457px"></div>
<div class="hl" style="left:0;top:469px;width:909px"></div>
<div class="hl" style="left:0;top:497px;width:909px"></div>
<div class="hl" style="left:0;top:525px;width:909px"></div>
<div class="hl" style="left:0;top:553px;width:909px"></div>
<div class="hl" style="left:0;top:581px;width:909px"></div>
<div class="hl" style="left:0;top:609px;width:909px"></div>
<div class="hl" style="left:0;top:637px;width:909px"></div>
<div class="hl" style="left:0;top:665px;width:909px"></div>
<div class="hl" style="left:0;top:693px;width:909px"></div>
<div class="hl" style="left:0;top:721px;width:909px"></div>
<div class="hl" style="left:0;top:749px;width:909px"></div>
<div class="vl" style="left:0px;top:428px;height:322px"></div>
<div class="vl" style="left:67px;top:428px;height:322px"></div>
<div class="vl" style="left:137px;top:428px;height:322px"></div>
<div class="vl" style="left:250px;top:428px;height:322px"></div>
<div class="vl" style="left:331px;top:428px;height:322px"></div>
<div class="vl" style="left:368px;top:428px;height:322px"></div>
<div class="vl" style="left:452px;top:428px;height:322px"></div>
<div class="vl" style="left:489px;top:451px;height:299px"></div>
<div class="vl" style="left:573px;top:451px;height:299px"></div>
<div class="vl" style="left:611px;top:428px;height:322px"></div>
<div class="vl" style="left:667px;top:451px;height:299px"></div>
<div class="vl" style="left:725px;top:451px;height:299px"></div>
<div class="vl" style="left:784px;top:428px;height:322px"></div>
<div class="vl" style="left:820px;top:451px;height:299px"></div>
<div class="vl" style="left:856px;top:451px;height:299px"></div>
<div style="position:absolute;left:0px;top:750px;width:909px;height:28px;background:#fff"></div>
<div class="vl" style="left:0;top:749px;height:28px"></div>
</body></html>
